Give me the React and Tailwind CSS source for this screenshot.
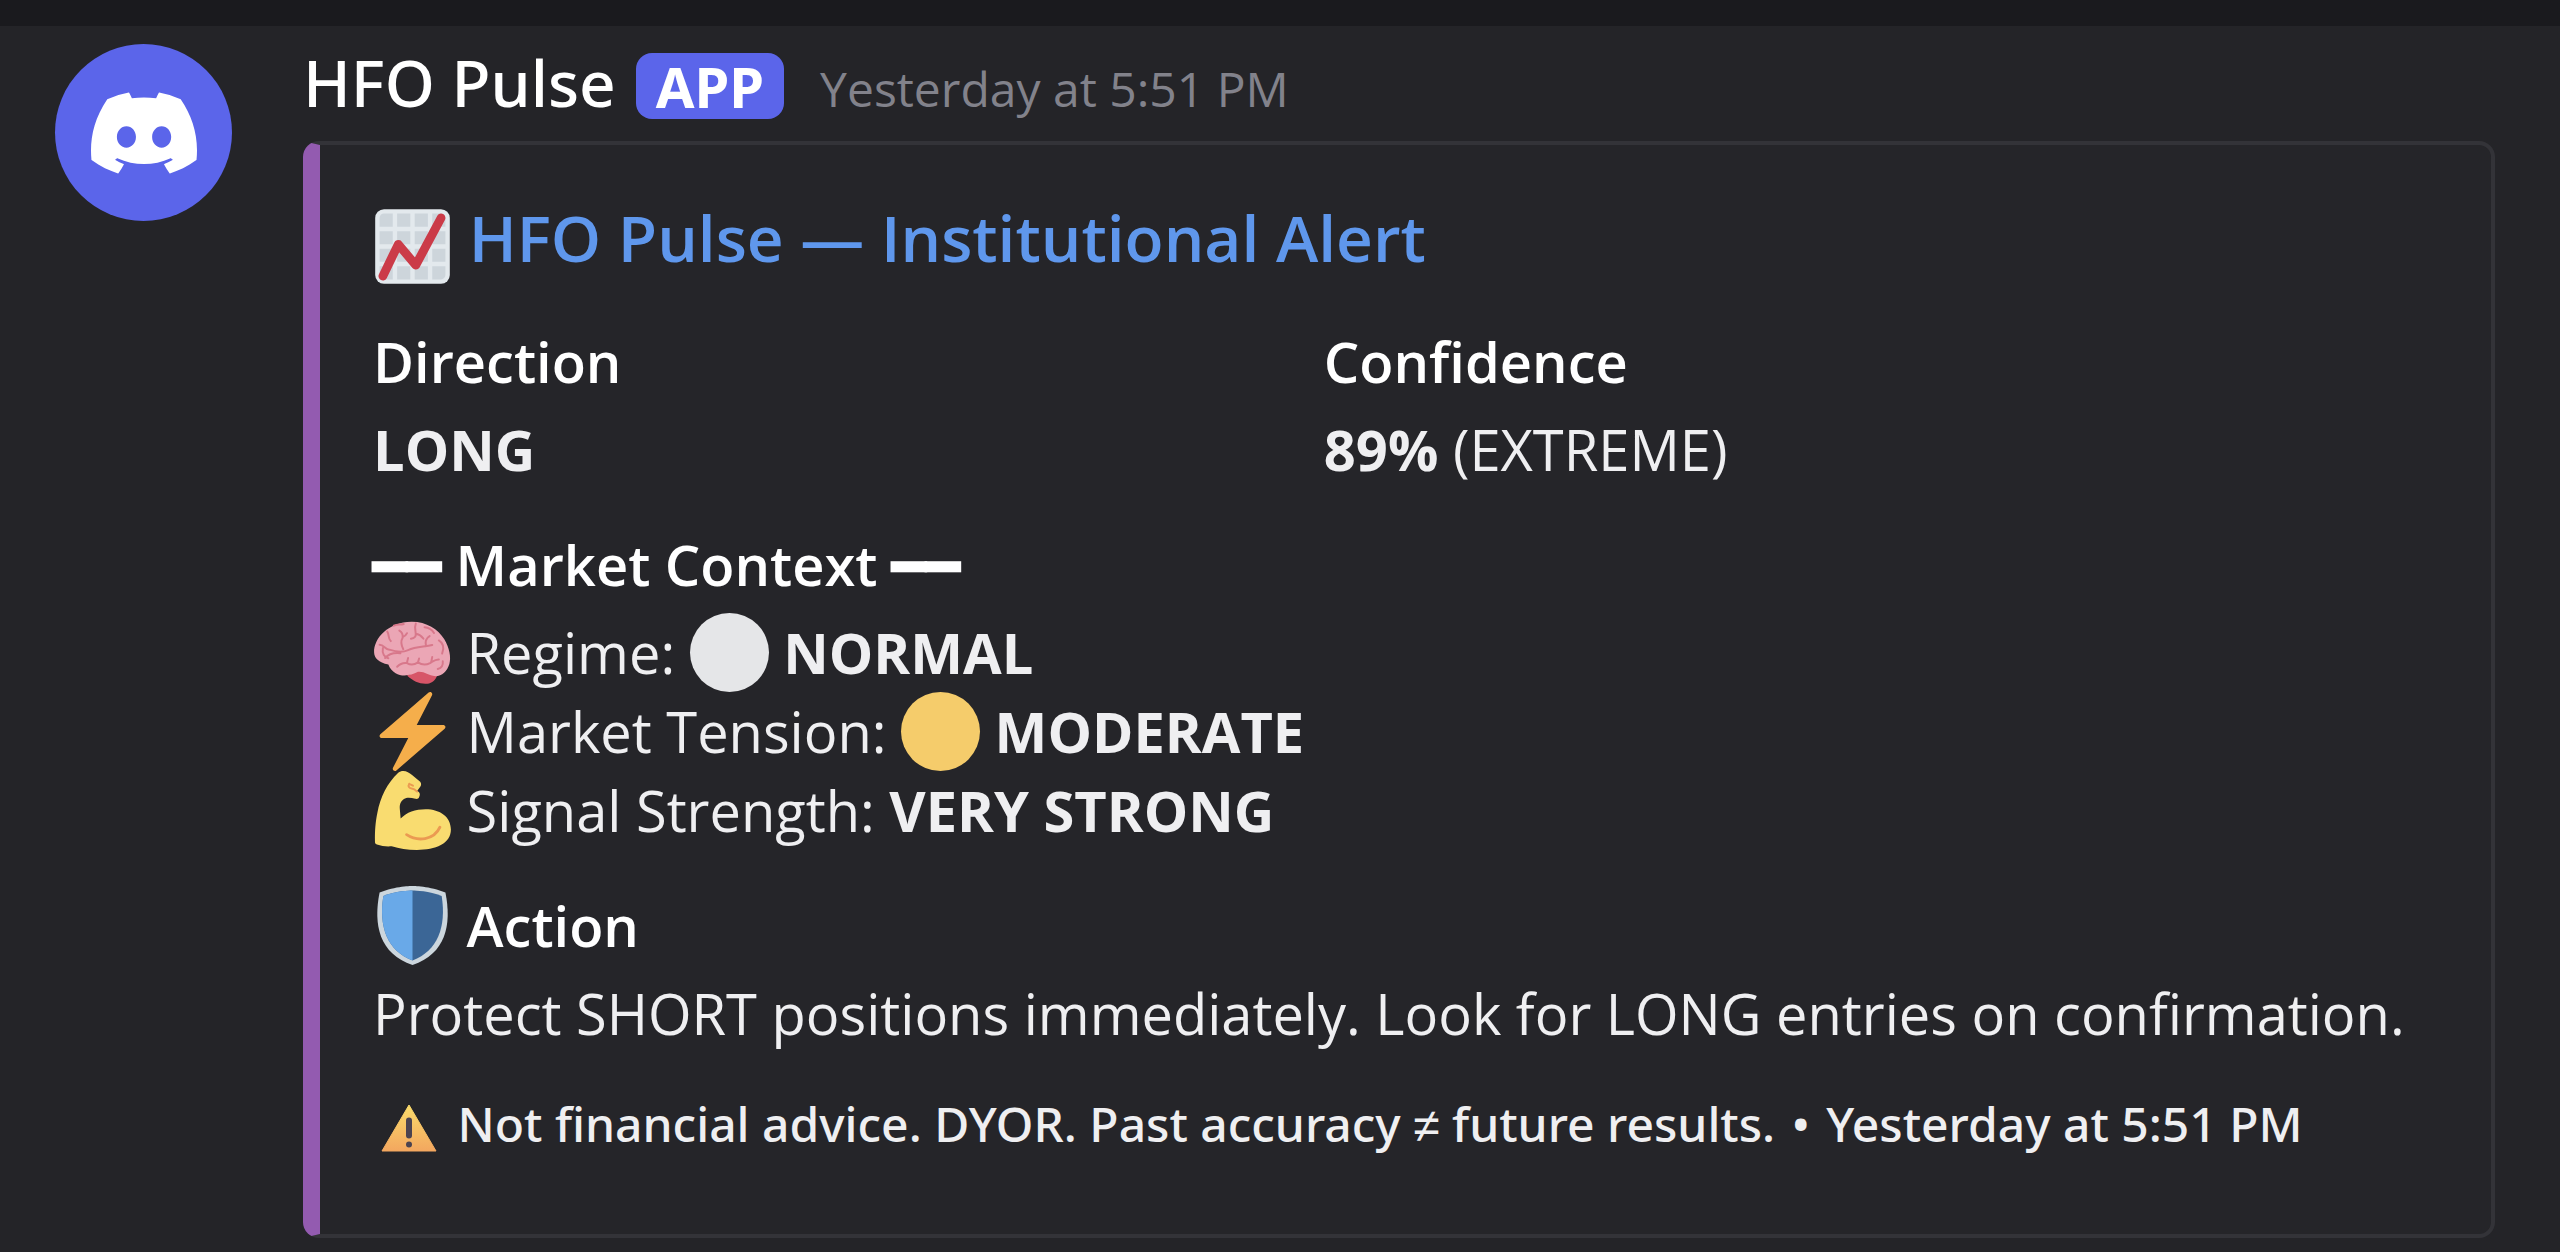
import { SiDiscord } from 'react-icons/si';

const EMOJI = 'inline-block size-[79px] align-bottom';

const ChartEmoji = () => (
  <svg viewBox="0 0 36 36" className={EMOJI} role="img" aria-label="chart increasing">
    <rect x="1" y="1" width="34" height="34" rx="4" fill="#e3e9ed" />
    <path
      fill="#cdd5db"
      d="M5 3h4v6H3V5c0-1.100.9-2 2-2zM11 3h6v6h-6zM19 3h6v6h-6zM27 3h4c1.100 0 2 .9 2 2v4h-6zM3 11h6v6H3zM11 11h6v6h-6zM19 11h6v6h-6zM27 11h6v6h-6zM3 19h6v6H3zM11 19h6v6h-6zM19 19h6v6h-6zM27 19h6v6h-6zM3 27h6v6H5c-1.100 0-2-.9-2-2zM11 27h6v6h-6zM19 27h6v6h-6zM27 27h6v4c0 1.100-.9 2-2 2h-4z"
    />
    <path d="M4.500 31.500l7-14.500 8 9.500L31 5" fill="none" stroke="#cb3b48" strokeWidth="4" strokeLinecap="round" strokeLinejoin="round" />
  </svg>
);

const BrainEmoji = () => (
  <svg viewBox="0 0 36 36" className={EMOJI} role="img" aria-label="brain">
    <path d="M15.500 28.500c3 2.800 6 4 9.300 3.700 2.200-.2 3.800-1.700 4.600-4.200l-6-3-7.900 3.500z" fill="#d75568" />
    <path
      d="M.5 18C.3 11.500 7 4.200 17.500 4c6.700-.1 12.200 3.300 15 8 2.300 3.800 3.200 8.200 2.300 11.200-1 3.300-3.300 5.500-6.300 5.600-3.500-.3-5-2.300-8-2-3.200 1.800-7.500 2.300-10.200.6-1.500-.9-2.700-2.200-3.300-3.900C2.500 22.500.6 20.500.5 18z"
      fill="#eba6b5"
    />
    <g fill="none" stroke="#d8788b" strokeWidth="0.9" strokeLinecap="round" strokeLinejoin="round">
      <path d="M6.500 8.500c1 1.300.2 3 1.600 4.300M9.500 5.800c1.700-.8 3-.3 4.500-.8M12 8c1.400.8 1.700 1.800 1.500 3.300-1 1.700-.7 3.300.3 5.200M13.500 11c1-.4 1.600-.9 2-1.800M19.500 4.800c-.9 2.200.3 3.600-.1 5.700M17.300 11.700c1.500-.2 2.300-1 2.200-2.200 1.500.2 2.300.8 3.500 2.200M23.500 6.500c2 .1 3.300 1 4.300 2.600M25.800 10.500c-1.700 1-2.200 2.300-1.600 4.600" />
      <path d="M3 14.500c2.200 0 2.400 2.300 4.500 2.200 2.300.8 5.500 1.600 8.500.2 3.500-1.700 7.500-1.400 11-2.300M30 12.500c2 1.200 2.500 3.500 1.500 6M5.500 20.500c2-2.300 4.500-2.500 7-2.200M4.500 16c-.5 2.500.8 4.200 2.500 4.600" />
      <path d="M11 24.500c1.200-1.300 2.500-2 4.500-1.700 1.700 1 3.300.8 5-.3 1.800 1.200 3.500 1.300 5.500.3 1.400-.8 2.400-1.700 4-1.600M16 20.500l-.5 2M21 20.700l-.5 1.800M27 20l-.5 2.500M31.800 22c.2 1.700-.6 3-2.300 3.500" />
    </g>
  </svg>
);

const BoltEmoji = () => (
  <svg viewBox="0 0 36 36" className={EMOJI} role="img" aria-label="lightning">
    <path
      fill="#f5ae4b"
      d="M32.938 15.651C32.792 15.260 32.418 15 32 15H19.925L26.890 1.458c.219-.426.106-.947-.271-1.243C26.437.071 26.218 0 26 0c-.233 0-.466.082-.653.243L18 6.588 3.347 19.243c-.316.273-.43.714-.284 1.105S3.582 21 4 21h12.075L9.110 34.542c-.219.426-.106.947.271 1.243.182.144.401.215.619.215.233 0 .466-.082.653-.243L18 29.412l14.653-12.655c.317-.273.43-.714.285-1.106z"
    />
  </svg>
);

const MuscleEmoji = () => (
  <svg viewBox="0 0 36 36" className={EMOJI} role="img" aria-label="flexed biceps">
    <path
      fill="#f9dc70"
      d="M13.800 0c1.500 0 2.800.8 4 1.800l3.700 3.100c.6.700.5 1.500.1 2.200l-1.500 2c1 .4 1.400 1.100 1.200 1.900l-.3 1c-.3.7-.9.9-1.700.7-2-.6-3.800-.9-5.200.1-1.600 1.200-2 2.500-1.900 4.300l.4 4.600c2.700-3 6.700-4.300 11.400-4.300 6.600 0 11.500 3.500 11.500 9.300 0 6.500-7 9.300-15.500 9.300-4.500 0-8-.7-11.500-1.700-2.500.2-4.500-.1-6.700-.8-.7-.3-.9-.6-.9-1.300C.8 27 1.100 23.500 2 19 3.300 12 6.500 5.500 11.500.8c.7-.6 1.400-.8 2.300-.8z"
    />
    <path d="M15.300 29c5 3.300 12.500 2.600 15.200-3.400" fill="none" stroke="#eb9a52" strokeWidth="1.300" strokeLinecap="round" />
    <path d="M16.500 5.800c-.7 1.300 0 2 1.100 2.200 1.100.1 1.900.8 2.500 1.400M17 6.100l1.200.6" fill="none" stroke="#eb9a52" strokeWidth="0.9" strokeLinecap="round" />
  </svg>
);

const ShieldEmoji = () => (
  <svg viewBox="0 0 36 36" className={EMOJI} role="img" aria-label="shield">
    <path fill="#ccd6dd" d="M33 3c-7-3-15-3-15-3S10 0 3 3C0 18 3 31 18 36c15-5 18-18 15-33z" />
    <path fill="#3b6696" d="M18 33.900C6.500 29.500 2.500 18.500 4.700 4.500 10.500 2.200 16.500 2 18 2s7.500.2 13.300 2.500C33.500 18.500 29.500 29.500 18 33.900z" />
    <path fill="#69a9e8" d="M18 2c-1.500 0-7.500.2-13.300 2.500C2.500 18.500 6.500 29.500 18 33.900z" />
  </svg>
);

const WarningIcon = () => (
  <svg viewBox="0 0 72 70" className="inline-block h-[70px] w-[72px] align-bottom" role="img" aria-label="warning">
    <defs>
      <linearGradient id="warn" x1="0" y1="0" x2="0" y2="1">
        <stop offset="0" stopColor="#fbdc6b" />
        <stop offset="1" stopColor="#f3a75f" />
      </linearGradient>
    </defs>
    <path d="M36 14l27 46H9z" fill="url(#warn)" stroke="url(#warn)" strokeLinejoin="round" />
    <path d="M36 29.500v15" stroke="#4b4350" strokeWidth="6" strokeLinecap="round" />
    <circle cx="36" cy="53.500" r="3" fill="#4b4350" />
  </svg>
);

const Dot = ({ className, label }) => (
  <span role="img" aria-label={label} className={`inline-block size-[79px] rounded-full align-bottom ${className}`} />
);

const Field = ({ name, children }) => (
  <div>
    <h3 className="mb-[9px] font-semibold text-white">{name}</h3>
    <div>{children}</div>
  </div>
);

export default function App() {
  return (
    <div className="min-h-screen bg-[#242428] font-['Open_Sans',sans-serif] text-[56px] leading-[79px] text-[#efeff1]">
      <div className="h-[26px] bg-[#1a1a1e]" />

      <article className="flex gap-[71px] pt-2 pr-[65px] pb-4 pl-[55px]">
        <div className="mt-2.5 flex size-[177px] shrink-0 items-center justify-center rounded-full bg-[#5b65ea]">
          <SiDiscord className="size-[106px] text-white" />
        </div>

        <div className="min-w-0 flex-1">
          <header className="mb-1 flex items-baseline font-['Noto_Sans',sans-serif] leading-[97px]">
            <h2 className="text-[64px] font-medium text-white">HFO Pulse</h2>
            <span className="ml-5 self-center rounded-[16px] bg-[#5b65ea] px-5 leading-[66px] font-bold text-white">
              APP
            </span>
            <time className="ml-9 font-['Open_Sans',sans-serif] text-[48px] text-[#82828b]">Yesterday at 5:51 PM</time>
          </header>

          <section className="flex flex-col gap-9 rounded-[16px] border-4 border-l-[17px] border-[#333338] border-l-[#935bb0] bg-[#252529] pt-11 pr-[70px] pb-[73px] pl-[53px]">
            <h1 className="text-[64px] leading-[97px] font-semibold text-[#5f97ec]">
              <ChartEmoji />{' '}
              <a href="#alert" className="hover:underline">HFO Pulse — Institutional Alert</a>
            </h1>

            <div className="grid grid-cols-[13fr_15fr]">
              <Field name="Direction">
                <strong>LONG</strong>
              </Field>
              <Field name="Confidence">
                <strong>89%</strong> (EXTREME)
              </Field>
            </div>

            <Field name="━━ Market Context ━━">
              <p>
                <BrainEmoji /> Regime: <Dot label="white circle" className="bg-[#e5e6e8]" /> <strong>NORMAL</strong>
              </p>
              <p>
                <BoltEmoji /> Market Tension: <Dot label="yellow circle" className="bg-[#f5cc6b]" />{' '}
                <strong>MODERATE</strong>
              </p>
              <p>
                <MuscleEmoji /> Signal Strength: <strong>VERY STRONG</strong>
              </p>
            </Field>

            <Field name={<><ShieldEmoji /> Action</>}>
              Protect SHORT positions immediately. Look for LONG entries on confirmation.
            </Field>

            <footer className="font-['Noto_Sans',sans-serif] text-[48px] leading-[70px] font-medium">
              <WarningIcon /> Not financial advice. DYOR. Past accuracy{' '}
              <span className="font-['Liberation_Sans',sans-serif]">≠</span> future results.{' '}
              <span className="mx-1">•</span> <time>Yesterday at 5:51 PM</time>
            </footer>
          </section>
        </div>
      </article>
    </div>
  );
}
